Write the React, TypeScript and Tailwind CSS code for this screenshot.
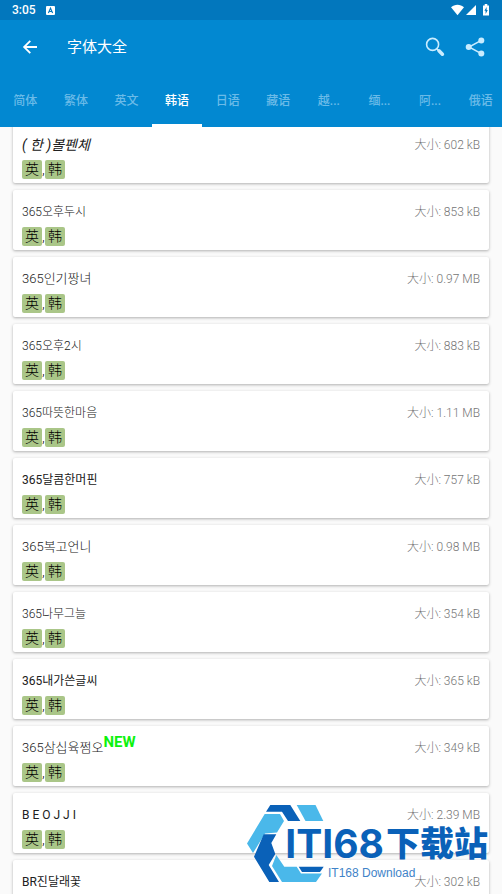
import clsx from 'clsx';

interface FontItem {
  name: string;
  size: string;
  className: string;
  tags: string[];
  isNew?: boolean;
}

const TABS = ['简体', '繁体', '英文', '韩语', '日语', '藏语', '越...', '缅...', '阿...', '俄语'];
const ACTIVE_TAB = '韩语';

const FONTS: FontItem[] = [
  { name: '( 한 )볼펜체', size: '602 kB', className: 'text-[14px] italic', tags: ['英', '韩'] },
  { name: '365오후두시', size: '853 kB', className: 'text-[12px] font-light', tags: ['英', '韩'] },
  { name: '365인기짱녀', size: '0.97 MB', className: 'text-[13px] font-light', tags: ['英', '韩'] },
  { name: '365오후2시', size: '883 kB', className: 'text-[12px] font-light', tags: ['英', '韩'] },
  { name: '365따뜻한마음', size: '1.11 MB', className: 'text-[12px] font-light', tags: ['英', '韩'] },
  { name: '365달콤한머핀', size: '757 kB', className: 'text-[12px]', tags: ['英', '韩'] },
  { name: '365복고언니', size: '0.98 MB', className: 'text-[13px] font-light', tags: ['英', '韩'] },
  { name: '365나무그늘', size: '354 kB', className: 'text-[12px] font-light', tags: ['英', '韩'] },
  { name: '365내가쓴글씨', size: '365 kB', className: 'text-[12px]', tags: ['英', '韩'] },
  { name: '365삼십육쩜오', size: '349 kB', className: 'text-[13px] font-light', tags: ['英', '韩'], isNew: true },
  { name: 'B E O J J I', size: '2.39 MB', className: 'text-[12px]', tags: ['英', '韩'] },
  { name: 'BR진달래꽃', size: '302 kB', className: 'text-[12px]', tags: [] },
];

const StatusBar = () => (
  <div className="flex h-5 items-center bg-[#0277bd] px-3 text-white">
    <span className="text-[12px] font-medium">3:05</span>
    <svg className="ml-2.5 h-[9px] w-[9px]" viewBox="0 0 9 9">
      <rect width="9" height="9" rx="1" fill="white" />
      <path d="M2.4 7 4.5 2.2 6.6 7M3.2 5.5h2.6" fill="none" stroke="#0277bd" strokeWidth="1.1" />
    </svg>
    <svg className="ml-auto h-3 w-[39px]" viewBox="0 0 39 12" fill="white">
      <path d="M0 3.2C3.5-.2 9.5-.2 13 3.2L6.5 11.2Z" />
      <path d="M25 1v10H15Z" />
      <path d="M32 1.5h1.7V0h2.6v1.5H38v10h-6Z" />
      <path d="M35.6 3 33.4 6.8h1.2V10l2.2-4h-1.2Z" fill="#0277bd" />
    </svg>
  </div>
);

const Toolbar = () => (
  <div className="flex h-[54px] items-center pl-[22px] pr-[17px] text-white">
    <button aria-label="返回" className="h-4 w-4">
      <svg viewBox="0 0 16 16" fill="none" stroke="currentColor" strokeWidth="1.8">
        <path d="M15 8H2.5M8.3 1.8 2.1 8l6.2 6.2" />
      </svg>
    </button>
    <h1 className="ml-[29px] text-[15px]">字体大全</h1>
    <button aria-label="搜索" className="ml-auto h-5 w-5 text-[#c9ecff]">
      <svg viewBox="0 0 20 20" fill="none" stroke="currentColor">
        <circle cx="7.6" cy="7.4" r="6" strokeWidth="1.6" />
        <path d="m11.8 11.8 2.4 2.4" strokeWidth="1.6" />
        <path d="m14 13.8 3.4 3.4" strokeWidth="3.6" strokeLinecap="round" />
      </svg>
    </button>
    <button aria-label="分享" className="ml-5 h-5 w-5 text-[#c9ecff]">
      <svg viewBox="0 0 20 20" fill="currentColor">
        <path d="M16.3 3.4 4 10l12.3 6.6" fill="none" stroke="currentColor" strokeWidth="1.5" />
        <circle cx="16.3" cy="3.4" r="3" />
        <circle cx="3.7" cy="10" r="3" />
        <circle cx="16.3" cy="16.6" r="3" />
      </svg>
    </button>
  </div>
);

const TabBar = () => (
  <nav className="-mr-1 flex h-[53px]">
    {TABS.map((tab) => (
      <button
        key={tab}
        className={clsx(
          'flex-1 border-b-[3px] pt-1 text-[12px] font-medium',
          tab === ACTIVE_TAB ? 'border-white text-white' : 'border-transparent text-[#6bbbe8]'
        )}
      >
        {tab}
      </button>
    ))}
  </nav>
);

const FontCard = ({ item }: { item: FontItem }) => (
  <li className="h-[60px] shrink-0 rounded-[2px] bg-white px-[9px] pt-3 shadow-[0_1px_3px_rgba(0,0,0,0.3)]">
    <div className="flex h-5 items-center">
      <span className={clsx('whitespace-pre text-[#202020]', item.className)}>{item.name}</span>
      {item.isNew && (
        <span className="self-start text-[15px] font-bold leading-2 text-[#0df20d]">NEW</span>
      )}
      <span className="ml-auto text-[12px] font-light text-[#757575]">大小: {item.size}</span>
    </div>
    <div className="mt-[5px] flex gap-[3px] text-[14px] font-light leading-[19px] text-black">
      {item.tags.map((tag, i) => (
        <span key={tag} className="relative h-[19px] w-5 rounded-[2px] bg-[#aac688] text-center">
          {tag}
          {i < item.tags.length - 1 && <span className="absolute left-full top-0">,</span>}
        </span>
      ))}
    </div>
  </li>
);

const Watermark = () => (
  <div className="absolute bottom-2 right-[14px] h-[82px] w-[242px] text-[#0a61b8]">
    <svg className="h-full w-20" viewBox="0 0 80 82">
      <g fill="#4ab8ea">
        <path d="M50.7 1H69.5L77.3 17H59.5Z" />
        <path d="M18.7 10H34L38 17L31 28.5L19 29.5L7 49L1 39.5Z" />
        <path d="M30.3 51L38.3 62.7H50.7L55 69.5H76L70 78H36L26 62Z" />
      </g>
      <g fill="#0a61b8">
        <path d="M24.3 1H44.3L54.3 17H42L36 7.7H20Z" />
        <path d="M17.7 30.3H30.3L25.3 39L29.3 50L22.7 61L33 78H23.3L8 52.7Z" />
        <path d="M52.7 62.7H77.7L74 67.9H56Z" />
      </g>
    </svg>
    <div className="absolute right-0 top-[22px] flex items-center gap-0.5 whitespace-nowrap leading-9">
      <span className="font-[Inter] text-[39px] font-bold">ITI68</span>
      <span className="text-[34px] font-black">下载站</span>
    </div>
    <span className="absolute left-[82px] top-[61px] font-['Liberation_Sans'] text-[12px] leading-4 text-[#3f83c8]">
      IT168 Download
    </span>
  </div>
);

export default function App() {
  return (
    <div className="relative flex h-screen flex-col overflow-hidden bg-[#fafafa] font-[Roboto,'Noto_Sans_CJK_SC','Noto_Sans_CJK_KR',sans-serif]">
      <header className="z-10 shrink-0 overflow-hidden bg-[#0288d1]">
        <StatusBar />
        <Toolbar />
        <TabBar />
      </header>
      {/* the list is scrolled a little, so the first card sits under the header */}
      <ul className="-mt-1 flex flex-col gap-[7px] px-[13px]">
        {FONTS.map((item) => (
          <FontCard key={item.name} item={item} />
        ))}
      </ul>
      <Watermark />
    </div>
  );
}
